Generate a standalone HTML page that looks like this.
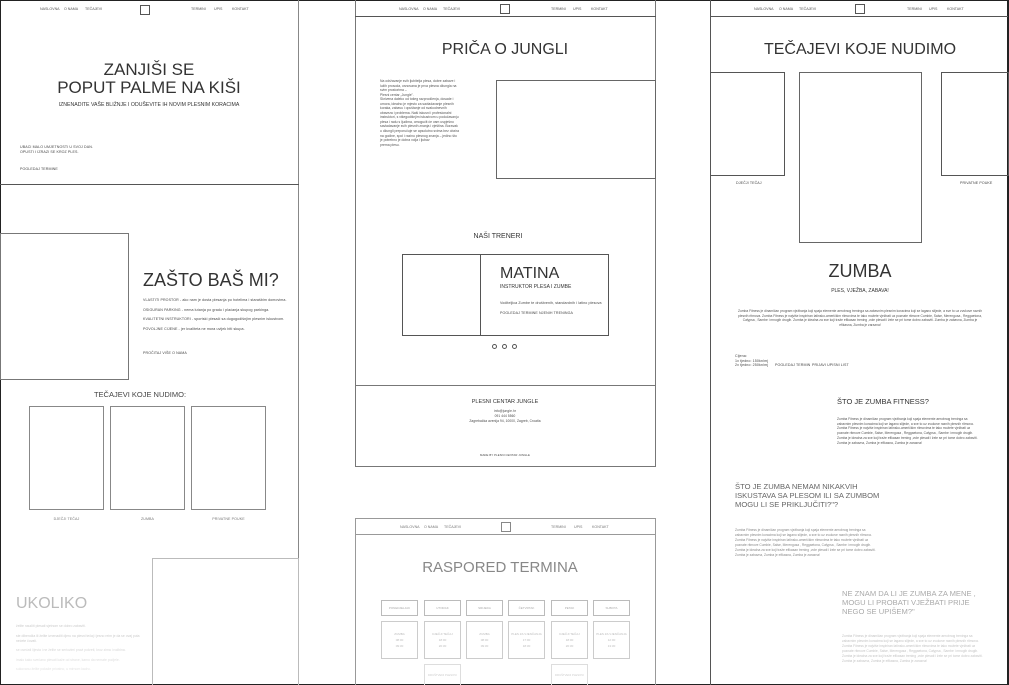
<!DOCTYPE html>
<html><head><meta charset="utf-8"><style>
*{margin:0;padding:0;box-sizing:border-box}
html,body{width:1009px;height:685px;overflow:hidden}
body{background:#fff;position:relative;font-family:"Liberation Sans",sans-serif;color:#222}
.a{position:absolute;white-space:nowrap}
.b{position:absolute;border:1px solid #777}
.hl{position:absolute;height:1px;background:#555}
.vl{position:absolute;width:1px;background:#666}
.t{font-size:3.6px;color:#444;letter-spacing:0.1px}
.n{font-size:3.6px;color:#555}
.c{text-align:center}
.p{position:absolute;font-size:3.4px;line-height:4.6px;color:#555;white-space:normal}
.h{color:#333 !important}
</style></head><body>
<div class="hl" style="left:0;top:0;width:1009px;background:#222"></div>
<div class="hl" style="left:0;top:684px;width:1009px;background:#222"></div>
<div class="vl" style="left:0;top:0;height:685px;background:#222"></div>
<div class="vl" style="left:1007px;top:0;height:685px;background:#222;width:2px"></div>

<!-- PANEL 1 -->
<div class="vl" style="left:298px;top:0;height:685px;background:#888"></div>
<div class="hl" style="left:0;top:184px;width:299px"></div>
<div class="a n" style="left:40px;top:7px">NASLOVNA</div>
<div class="a n" style="left:64px;top:7px">O NAMA</div>
<div class="a n" style="left:85px;top:7px">TEČAJEVI</div>
<div class="b" style="left:140px;top:5px;width:10px;height:10px;border-color:#555"></div>
<div class="a n" style="left:191px;top:7px">TERMINI</div>
<div class="a n" style="left:214px;top:7px">UPIS</div>
<div class="a n" style="left:232px;top:7px">KONTAKT</div>
<div class="a c h" style="left:0;width:298px;top:61px;font-size:17px;line-height:18px">ZANJIŠI SE<br>POPUT PALME NA KIŠI</div>
<div class="a c" style="left:0;width:298px;top:102px;font-size:5.2px;color:#333">IZNENADITE VAŠE BLIŽNJE I ODUŠEVITE IH NOVIM PLESNIM KORACIMA</div>
<div class="a t" style="left:20px;top:145px;line-height:4.5px">UBACI MALO UMJETNOSTI U SVOJ DAN.<br>OPUSTI I IZRAZI SE KROZ PLES.</div>
<div class="a t" style="left:20px;top:167px">POGLEDAJ TERMINE</div>

<div class="b" style="left:0;top:233px;width:129px;height:147px"></div>
<div class="a h" style="left:143px;top:270px;font-size:18px">ZAŠTO BAŠ MI?</div>
<div class="a t" style="left:143px;top:298px">VLASTITI PROSTOR - ako nam je dosta plesanja po hotelima i starašbim domovima.</div>
<div class="a t" style="left:143px;top:308px">OSIGURAN PARKING - nema lutanja po gradu i plaćanja skupog parkinga.</div>
<div class="a t" style="left:143px;top:317px">KVALITETNI INSTRUKTORI - sportski plesači sa dugogodišnjim plesnim iskustvom.</div>
<div class="a t" style="left:143px;top:327px">POVOLJNE CIJENE - jer kvaliteta ne mora uvijek biti skupa.</div>
<div class="a t" style="left:143px;top:351px">PROČITAJ VIŠE O NAMA</div>
<div class="a c" style="left:0;width:280px;top:390px;font-size:7.5px;color:#444">TEČAJEVI KOJE NUDIMO:</div>
<div class="b" style="left:29px;top:406px;width:75px;height:104px;border-color:#888"></div>
<div class="b" style="left:110px;top:406px;width:75px;height:104px;border-color:#888"></div>
<div class="b" style="left:191px;top:406px;width:75px;height:104px;border-color:#888"></div>
<div class="a t c" style="left:29px;width:75px;top:517px;color:#777">DJEČJI TEČAJ</div>
<div class="a t c" style="left:110px;width:75px;top:517px;color:#777">ZUMBA</div>
<div class="a t c" style="left:191px;width:75px;top:517px;color:#777">PRIVATNE POUKE</div>
<div class="b" style="left:152px;top:558px;width:147px;height:130px;border-color:#bbb"></div>
<div class="a" style="left:16px;top:595px;font-size:16px;color:#bbb">UKOLIKO</div>
<div class="p" style="left:16px;top:624px;width:125px;color:#ccc">želite naučiti plesati sjetnom se dobro zabaviti.</div>
<div class="p" style="left:16px;top:634px;width:125px;color:#ccc">ste dibendža ili želite iznenaditi djeru na plesni tečaj i jesno reim je da se ovaj puta nećete čovati.</div>
<div class="p" style="left:16px;top:648px;width:130px;color:#d6d6d6">se osećati lijesta i ne želite se seriozimi pravi pokreti, kroz zima i rodbina.</div>
<div class="p" style="left:16px;top:658px;width:130px;color:#ddd">imalo kako svečano plesati kaže od strane, kamo da nemate podjele.</div>
<div class="p" style="left:16px;top:667px;width:130px;color:#e3e3e3">sukovanu želite pokaže privatno, u mirnom kadru.</div>

<!-- PANEL 2 -->
<div class="vl" style="left:355px;top:0;height:467px;background:#777"></div>
<div class="vl" style="left:655px;top:0;height:467px;background:#777"></div>
<div class="hl" style="left:355px;top:16px;width:301px"></div>
<div class="hl" style="left:355px;top:466px;width:301px;background:#777"></div>
<div class="a n" style="left:399px;top:7px">NASLOVNA</div>
<div class="a n" style="left:423px;top:7px">O NAMA</div>
<div class="a n" style="left:443px;top:7px">TEČAJEVI</div>
<div class="b" style="left:500px;top:4px;width:10px;height:10px;border-color:#555"></div>
<div class="a n" style="left:551px;top:7px">TERMINI</div>
<div class="a n" style="left:573px;top:7px">UPIS</div>
<div class="a n" style="left:591px;top:7px">KONTAKT</div>
<div class="a c h" style="left:355px;width:300px;top:41px;font-size:16px">PRIČA O JUNGLI</div>
<div class="p" style="left:380px;top:79px;width:80px;font-size:3.4px;line-height:4.55px">Na održavanje svih ljubitelja plesa, dobre zabave i lužih prosoda, osnovana je prva plesna džungla na svim prostorima –<br>Plesni centar „Jungle".<br>Skrivena daleko od tošeg razprodčenja, dosade i umora, idealno je mjesto za savladavanje plesnih koraka, zabavu i opuštanje od svakodnevnih obaveza i problema. Naši iskusni i profesionalni instruktori, s višegodišnjim iskustvom u podučavanju plesa i radu s ljudima, omogućit će vam uspješno savladavanje svih plesnih znanja i vještina. Boravak u džungli preporučuje se apsolutno svima bez obzira na godine, spol i razinu plesnog znanja – jedino što je potrebno je dobra volja i ljubav<br>prema plesu.</div>
<div class="b" style="left:496px;top:80px;width:160px;height:99px;border-color:#666"></div>
<div class="a c" style="left:355px;width:286px;top:233px;font-size:7px;color:#333">NAŠI TRENERI</div>
<div class="b" style="left:402px;top:254px;width:207px;height:82px;border-color:#555"></div>
<div class="vl" style="left:480px;top:254px;height:82px;background:#555"></div>
<div class="a h" style="left:500px;top:265px;font-size:16px">MATINA</div>
<div class="a" style="left:500px;top:284px;font-size:5px;color:#333">INSTRUKTOR PLESA I ZUMBE</div>
<div class="a t" style="left:500px;top:301px">Voditeljica Zumbe te društvenih, standardnih i latino plesova</div>
<div class="a t" style="left:500px;top:311px">POGLEDAJ TERMINE NJENIH TRENINGA</div>
<div class="a" style="left:492px;top:344px;width:5px;height:5px;border:0.8px solid #555;border-radius:50%"></div>
<div class="a" style="left:502px;top:344px;width:5px;height:5px;border:0.8px solid #555;border-radius:50%"></div>
<div class="a" style="left:512px;top:344px;width:5px;height:5px;border:0.8px solid #555;border-radius:50%"></div>
<div class="hl" style="left:355px;top:385px;width:301px;background:#777"></div>
<div class="a c" style="left:355px;width:300px;top:399px;font-size:5.5px;color:#333">PLESNI CENTAR JUNGLE</div>
<div class="a c t" style="left:355px;width:300px;top:409px;font-size:3.2px;line-height:5px">info@jungle.hr<br>091 444 5560<br>Zagrebačka avenija 94, 10000, Zagreb, Croatia</div>
<div class="a c t" style="left:355px;width:300px;top:453px;font-size:2.8px">MADE BY PLESNI CENTAR JUNGLE</div>

<!-- PANEL 2b -->
<div class="vl" style="left:355px;top:518px;height:167px;background:#999"></div>
<div class="vl" style="left:655px;top:518px;height:167px;background:#999"></div>
<div class="hl" style="left:355px;top:518px;width:301px;background:#999"></div>
<div class="hl" style="left:355px;top:534px;width:301px;background:#999"></div>
<div class="a n" style="left:400px;top:525px;color:#777">NASLOVNA</div>
<div class="a n" style="left:424px;top:525px;color:#777">O NAMA</div>
<div class="a n" style="left:444px;top:525px;color:#777">TEČAJEVI</div>
<div class="b" style="left:501px;top:522px;width:10px;height:10px;border-color:#888"></div>
<div class="a n" style="left:551px;top:525px;color:#777">TERMINI</div>
<div class="a n" style="left:574px;top:525px;color:#777">UPIS</div>
<div class="a n" style="left:592px;top:525px;color:#777">KONTAKT</div>
<div class="a c" style="left:355px;width:290px;top:559px;font-size:15px;color:#888">RASPORED TERMINA</div>
<div class="b" style="left:381px;top:600px;width:37px;height:16px;border-color:#bbb"></div>
<div class="b" style="left:424px;top:600px;width:37px;height:16px;border-color:#bbb"></div>
<div class="b" style="left:466px;top:600px;width:37px;height:16px;border-color:#bbb"></div>
<div class="b" style="left:508px;top:600px;width:37px;height:16px;border-color:#bbb"></div>
<div class="b" style="left:551px;top:600px;width:37px;height:16px;border-color:#bbb"></div>
<div class="b" style="left:593px;top:600px;width:37px;height:16px;border-color:#bbb"></div>
<div class="a c n" style="left:381px;width:37px;top:606px;color:#aaa;font-size:3px">PONEDJELJAK</div>
<div class="a c n" style="left:424px;width:37px;top:606px;color:#aaa;font-size:3px">UTORAK</div>
<div class="a c n" style="left:466px;width:37px;top:606px;color:#aaa;font-size:3px">SRIJEDA</div>
<div class="a c n" style="left:508px;width:37px;top:606px;color:#aaa;font-size:3px">ČETVRTAK</div>
<div class="a c n" style="left:551px;width:37px;top:606px;color:#aaa;font-size:3px">PETAK</div>
<div class="a c n" style="left:593px;width:37px;top:606px;color:#aaa;font-size:3px">SUBOTA</div>
<div class="b" style="left:381px;top:621px;width:37px;height:38px;border-color:#ccc"></div>
<div class="b" style="left:424px;top:621px;width:37px;height:38px;border-color:#ccc"></div>
<div class="b" style="left:466px;top:621px;width:37px;height:38px;border-color:#ccc"></div>
<div class="b" style="left:508px;top:621px;width:37px;height:38px;border-color:#ccc"></div>
<div class="b" style="left:551px;top:621px;width:37px;height:38px;border-color:#ccc"></div>
<div class="b" style="left:593px;top:621px;width:37px;height:38px;border-color:#ccc"></div>
<div class="a c n" style="left:381px;width:37px;top:631px;color:#bbb;font-size:3px;line-height:6px">ZUMBA<br>08:00<br>09:30</div>
<div class="a c n" style="left:424px;width:37px;top:631px;color:#bbb;font-size:3px;line-height:6px">DJEČJI TEČAJ<br>18:00<br>20:30</div>
<div class="a c n" style="left:466px;width:37px;top:631px;color:#bbb;font-size:3px;line-height:6px">ZUMBA<br>08:00<br>09:30</div>
<div class="a c n" style="left:508px;width:37px;top:631px;color:#bbb;font-size:3px;line-height:6px">PLES ZA VJENČANJA<br>17:00<br>18:30</div>
<div class="a c n" style="left:551px;width:37px;top:631px;color:#bbb;font-size:3px;line-height:6px">DJEČJI TEČAJ<br>18:00<br>20:30</div>
<div class="a c n" style="left:593px;width:37px;top:631px;color:#bbb;font-size:3px;line-height:6px">PLES ZA VJENČANJA<br>12:00<br>13:30</div>
<div class="b" style="left:424px;top:664px;width:37px;height:30px;border-color:#ddd"></div>
<div class="b" style="left:551px;top:664px;width:37px;height:30px;border-color:#ddd"></div>
<div class="a c n" style="left:424px;width:37px;top:673px;color:#ccc;font-size:2.8px">DRUŠTVENI PLESOVI</div>
<div class="a c n" style="left:551px;width:37px;top:673px;color:#ccc;font-size:2.8px">DRUŠTVENI PLESOVI</div>

<!-- PANEL 3 -->
<div class="vl" style="left:710px;top:0;height:685px;background:#555"></div>
<div class="hl" style="left:710px;top:16px;width:298px"></div>
<div class="a n" style="left:754px;top:7px">NASLOVNA</div>
<div class="a n" style="left:779px;top:7px">O NAMA</div>
<div class="a n" style="left:799px;top:7px">TEČAJEVI</div>
<div class="b" style="left:855px;top:4px;width:10px;height:10px;border-color:#555"></div>
<div class="a n" style="left:907px;top:7px">TERMINI</div>
<div class="a n" style="left:929px;top:7px">UPIS</div>
<div class="a n" style="left:947px;top:7px">KONTAKT</div>
<div class="a c h" style="left:710px;width:300px;top:41px;font-size:16px">TEČAJEVI KOJE NUDIMO</div>
<div class="b" style="left:710px;top:72px;width:75px;height:104px;border-color:#555"></div>
<div class="b" style="left:799px;top:72px;width:123px;height:171px;border-color:#666"></div>
<div class="b" style="left:941px;top:72px;width:68px;height:104px;border-color:#555"></div>
<div class="a t" style="left:736px;top:181px">DJEČJI TEČAJ</div>
<div class="a t" style="left:960px;top:181px">PRIVATNE POUKE</div>
<div class="a c h" style="left:710px;width:300px;top:261px;font-size:18px">ZUMBA</div>
<div class="a c" style="left:710px;width:300px;top:288px;font-size:5px;color:#333">PLES, VJEŽBA, ZABAVA!</div>
<div class="p c" style="left:736px;top:309px;width:248px;font-size:3.3px;line-height:4.7px">Zumba Fitness je dinamičan program vježbanja koji spaja elemente aerobnog treninga sa zabavnim plesnim koracima koji se lagano slijede, a sve to uz zvukove raznih plesnih ritmova. Zumba Fitness je najviše inspiriran latinsko-američkim ritmovima te tako možete vježbati uz poznate ritmove Cumbie, Salse, Merengusa , Reggaetona, Calypsa , Sambe i mnogih drugih. Zumba je idealna za sve koji traže efikasan trening ,vole plesati i žele se pri tome dobro zabaviti. Zumba je zabavna, Zumba je efikasna, Zumba je zarazna!</div>
<div class="a t" style="left:735px;top:354px;line-height:4.7px">Cijena:<br>1x tjedno: 150kn/mj<br>2x tjedno: 250kn/mj</div>
<div class="a t" style="left:775px;top:363px">POGLEDAJ TERMIN</div>
<div class="a t" style="left:812px;top:363px">PRIJAVI UPISNI LIST</div>
<div class="a h" style="left:837px;top:397px;font-size:7.5px">ŠTO JE ZUMBA FITNESS?</div>
<div class="p" style="left:837px;top:417px;width:143px;font-size:3.3px;line-height:4.7px">Zumba Fitness je dinamičan program vježbanja koji spaja elemente aerobnog treninga sa zabavnim plesnim koracima koji se lagano slijede, a sve to uz zvukove raznih plesnih ritmova. Zumba Fitness je najviše inspiriran latinsko-američkim ritmovima te tako možete vježbati uz poznate ritmove Cumbie, Salse, Merengusa , Reggaetona, Calypsa , Sambe i mnogih drugih. Zumba je idealna za sve koji traže efikasan trening ,vole plesati i žele se pri tome dobro zabaviti. Zumba je zabavna, Zumba je efikasna, Zumba je zarazna!</div>
<div class="a" style="left:735px;top:482px;font-size:7.6px;line-height:9px;color:#666">ŠTO JE ZUMBA NEMAM NIKAKVIH<br>ISKUSTAVA SA PLESOM ILI SA ZUMBOM<br>MOGU LI SE PRIKLJUČITI?"?</div>
<div class="p" style="left:735px;top:528px;width:145px;font-size:3.3px;line-height:4.9px;color:#888">Zumba Fitness je dinamičan program vježbanja koji spaja elemente aerobnog treninga sa zabavnim plesnim koracima koji se lagano slijede, a sve to uz zvukove raznih plesnih ritmova. Zumba Fitness je najviše inspiriran latinsko-američkim ritmovima te tako možete vježbati uz poznate ritmove Cumbie, Salse, Merengusa , Reggaetona, Calypsa , Sambe i mnogih drugih. Zumba je idealna za sve koji traže efikasan trening ,vole plesati i žele se pri tome dobro zabaviti. Zumba je zabavna, Zumba je efikasna, Zumba je zarazna!</div>
<div class="a" style="left:842px;top:589px;font-size:7.6px;line-height:9px;color:#aaa">NE ZNAM DA LI JE ZUMBA ZA MENE ,<br>MOGU LI PROBATI VJEŽBATI PRIJE<br>NEGO SE UPIŠEM?"</div>
<div class="p" style="left:842px;top:634px;width:145px;font-size:3.3px;line-height:4.9px;color:#c4c4c4">Zumba Fitness je dinamičan program vježbanja koji spaja elemente aerobnog treninga sa zabavnim plesnim koracima koji se lagano slijede, a sve to uz zvukove raznih plesnih ritmova. Zumba Fitness je najviše inspiriran latinsko-američkim ritmovima te tako možete vježbati uz poznate ritmove Cumbie, Salse, Merengusa , Reggaetona, Calypsa , Sambe i mnogih drugih. Zumba je idealna za sve koji traže efikasan trening ,vole plesati i žele se pri tome dobro zabaviti. Zumba je zabavna, Zumba je efikasna, Zumba je zarazna!</div>
</body></html>
